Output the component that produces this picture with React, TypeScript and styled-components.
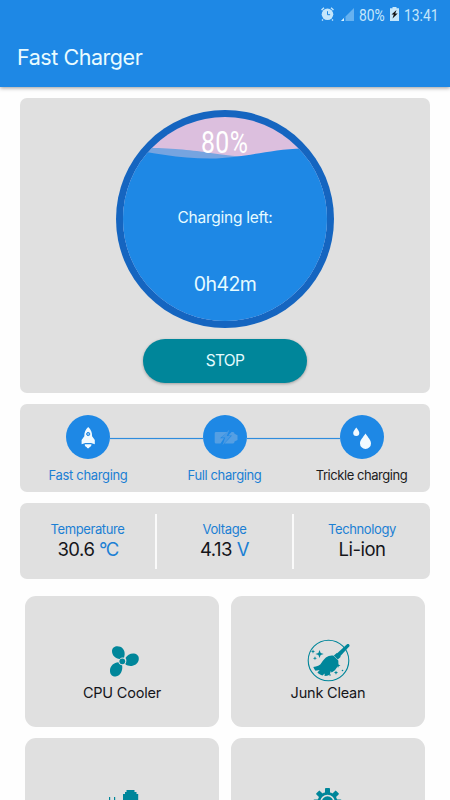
import React from "react";
import styled, { createGlobalStyle } from "styled-components";

const BLUE = "#1e88e5";
const TEAL = "#00869a";
const LABEL = "#1b7fd4";

const GlobalStyle = createGlobalStyle`
  * { box-sizing: border-box; }
  html, body { margin: 0; padding: 0; background: #fefefe; overflow: hidden; }
  body { font-family: Inter, Roboto, sans-serif; color: #15151a; }
`;

const Screen = styled.div`
  width: 450px;
  height: 800px;
  overflow: hidden;
  background: #fefefe;
  display: flex;
  flex-direction: column;
`;

const Header = styled.header`
  flex: none;
  height: 87px;
  background: ${BLUE};
  box-shadow: 0 1px 4px rgba(0, 0, 0, 0.4);
`;

const StatusBar = styled.div`
  height: 28px;
  padding: 0 11px 0 0;
  display: flex;
  align-items: center;
  justify-content: flex-end;
  color: #c4e6fb;
  font: 400 16.5px/27px Roboto, sans-serif;
`;

const StatusText = styled.span<{ $width: number }>`
  width: ${(p) => p.$width}px;
  margin-top: 2px;
  white-space: nowrap;
  transform: scaleX(0.84);
  transform-origin: left center;
`;

const StatusIcon = styled.svg<{ $gap: number }>`
  flex: none;
  display: block;
  margin-right: ${(p) => p.$gap}px;
`;

const Title = styled.h1`
  margin: 0;
  padding-left: 17px;
  font-size: 21.5px;
  line-height: 58px;
  font-weight: 400;
  letter-spacing: -0.45px;
  color: #e9fbff;
`;

const Main = styled.main`
  padding: 11px 20px 0;
  display: flex;
  flex-direction: column;
`;

const Card = styled.section<{ $height: number; $gap: number }>`
  flex: none;
  height: ${(p) => p.$height}px;
  margin-bottom: ${(p) => p.$gap}px;
  background: #e0e0e0;
  border-radius: 7px;
`;

const ChargeCard = styled(Card)`
  display: flex;
  flex-direction: column;
  align-items: center;
  padding-top: 11.5px;
`;

const Gauge = styled.div`
  position: relative;
  width: 218px;
  height: 218px;
  color: #e6fbff;
  text-align: center;
`;

const Wave = styled.svg`
  position: absolute;
  inset: 0;
`;

const GaugeText = styled.div`
  position: relative;
  display: flex;
  flex-direction: column;
  align-items: center;
`;

const Percent = styled.div`
  margin-top: 14px;
  height: 38px;
  font: 400 31px/38px Roboto, sans-serif;
  letter-spacing: 0.6px;
  color: #fff;
  transform: scaleX(0.8);
`;

const GaugeLabel = styled.div`
  margin-top: 44px;
  font-size: 15.5px;
  line-height: 24px;
  letter-spacing: -0.25px;
`;

const TimeLeft = styled.div`
  margin-top: 38px;
  font-size: 19.5px;
  line-height: 32px;
  letter-spacing: -0.6px;
`;

const StopButton = styled.button`
  margin-top: 11.5px;
  width: 164px;
  height: 44px;
  border: 0;
  border-radius: 22px;
  background: ${TEAL};
  color: #e4fbff;
  font: 400 15.5px/44px Inter, sans-serif;
  letter-spacing: -0.7px;
  padding: 0;
  box-shadow: 0 1px 3px rgba(0, 0, 0, 0.3);
`;

const StageCard = styled(Card)`
  display: grid;
  grid-template-columns: 136px 137px 137px;
  padding-top: 11px;
`;

const Stage = styled.div`
  display: flex;
  flex-direction: column;
  align-items: center;
`;

const StageRow = styled.div<{ $left: boolean; $right: boolean }>`
  align-self: stretch;
  height: 44px;
  display: grid;
  grid-template-columns: 1fr 44px 1fr;
  align-items: center;
  &::before,
  &::after {
    content: "";
    height: 1px;
    margin-top: 3px;
    box-shadow: 0 0 1px #3890dc;
  }
  &::before {
    background: #2f8cdd;
    visibility: ${(p) => (p.$left ? "visible" : "hidden")};
  }
  &::after {
    background: #2f8cdd;
    visibility: ${(p) => (p.$right ? "visible" : "hidden")};
  }
`;

const StageDot = styled.div`
  width: 44px;
  height: 44px;
  border-radius: 50%;
  background: ${BLUE};
  svg { display: block; }
`;

const StageLabel = styled.div<{ $muted: boolean; $spacing: number }>`
  margin-top: 6px;
  font-size: 13px;
  line-height: 20px;
  letter-spacing: ${(p) => p.$spacing}px;
  white-space: nowrap;
  color: ${(p) => (p.$muted ? "#1c1c20" : LABEL)};
`;

const StatsCard = styled(Card)`
  display: grid;
  grid-template-columns: 135px 137px 138px;
  padding: 11px 0 10px;
`;

const Stat = styled.div`
  display: flex;
  flex-direction: column;
  align-items: center;
  padding-top: 6px;
  & + & { border-left: 2px solid #fafafa; }
`;

const StatLabel = styled.div`
  font-size: 13px;
  line-height: 18px;
  letter-spacing: -0.38px;
  color: ${LABEL};
`;

const StatValue = styled.div`
  font-size: 18.5px;
  line-height: 22px;
  letter-spacing: -0.5px;
  white-space: pre;
`;

const Unit = styled.span`
  color: ${LABEL};
`;

const Degree = styled(Unit)`
  letter-spacing: -1.6px;
`;

const Tools = styled.div`
  padding: 0 5px;
  display: grid;
  grid-template-columns: 194px 194px;
  grid-auto-rows: 131px;
  gap: 11px 12px;
`;

const Tool = styled.div`
  background: #e0e0e0;
  border-radius: 11px;
  display: flex;
  flex-direction: column;
  align-items: center;
  padding-top: 42px;
  svg { display: block; flex: none; }
`;

const ToolLabel = styled.div`
  font-size: 14.5px;
  line-height: 20px;
  margin-top: 1px;
  letter-spacing: -0.2px;
`;

const FanIcon = () => (
  <svg width="44" height="44" viewBox="0 0 44 44" fill={TEAL}>
    <circle cx="22.300" cy="23.300" r="2.900" />
    <path d="M19.700 20.900c-3.900-.3-7.900-3.600-7.700-8 .2-4.200 4.600-5.700 8.300-4.100 4.300 1.900 5.200 6.600 3.700 10.900-1.700-.4-3.200 0-4.300 1.200z" />
    <path d="M26.300 23.400c.2-1.200-.1-2.400-.8-3.300 1.600-3 5-4.900 8.500-4.500 3.700.5 5.300 3.200 4.700 6.400-.9 4.800-6.500 7-10.900 5.600-1.100-.4-2-1-2.600-1.700.6-.6 1-1.500 1.100-2.500z" />
    <path d="M18.400 24.200c.5 1.700 1.800 2.900 3.700 3.100 1 4.600-1.500 10.900-6.400 11.200-4.100.2-6-3-5.700-6.600.4-4.400 4-7.300 8.400-7.700z" />
  </svg>
);

const BroomIcon = () => (
  <svg width="44" height="44" viewBox="0 0 44 44" fill={TEAL}>
    <circle cx="22.500" cy="22.500" r="20.300" fill="none" stroke={TEAL} strokeWidth="1.100" />
    <path d="M41 6.300c1.700-1 3.300.8 2.200 2.300L33.300 19.300l-3.200-3.100z" />
    <path d="M30.900 14.900l3.900 3.900-3 2.700-4-4z" />
    <path d="M27.300 17.500l5 5c.7 5-2.200 9.900-6.700 11.900l-.8-1.500-1.100 3.900c-1.800.8-3.400 1.300-5.200 1.300l.2-2.500-2.200 1.900c-2-.6-3.800-1.700-5.100-3.100l2.300-2.400-4.200.7c-.9-1.100-1.700-2.300-2.200-3.600 3.400-.2 6.900-1.600 8.400-4.500 2.400-4.400 6.600-7.900 11.600-7.100z" />
    <path d="M13.500 12l1.200 2.900 3 1.100-3 1.100-1.200 2.900-1.100-2.900-3-1.100 3-1.100z" />
    <path d="M7 11.300l.6 1.600 1.600.6-1.600.6-.6 1.600-.6-1.600-1.600-.6 1.600-.6zM9 18.200l.5 1.500 1.500.5-1.500.6-.5 1.500-.6-1.500-1.500-.6 1.500-.5zM32 25l.7 1.800 1.800.7-1.800.7-.7 1.800-.7-1.800-1.800-.7 1.800-.7zM30 32.500l.6 1.500 1.500.6-1.500.6-.6 1.500-.6-1.500-1.500-.6 1.500-.6z" />
    <circle cx="24" cy="37" r=".8" />
    <circle cx="36.500" cy="32.500" r=".8" />
  </svg>
);

const PlugIcon = () => (
  <svg width="44" height="44" viewBox="0 0 44 44" fill={TEAL}>
    <path d="M9 17h1.200v12H9zM14 17h1.200v12H14z" />
    <path d="M26.500 10h8v2h2v2h1.700v18H23V14h2v-2h1.500z" />
  </svg>
);

const GearIcon = () => (
  <svg width="44" height="44" viewBox="0 0 44 44">
    <g fill={TEAL}>
      <circle cx="21.500" cy="22" r="10" />
      {[0, 45, 90, 135, 180, 225, 270, 315].map((angle) => (
        <rect key={angle} x="19" y="8" width="5" height="6" rx=".8" transform={`rotate(${angle} 21.500 22)`} />
      ))}
    </g>
    <circle cx="21.500" cy="22" r="6.500" fill={TEAL} stroke="#e0e0e0" strokeWidth="1.500" />
  </svg>
);

const RocketIcon = () => (
  <svg width="44" height="44" viewBox="0 0 44 44" fill="#f1faff">
    <path d="M22.200 12c2.900 2.600 3.900 5.500 3.900 9.200l2.700 3.700v4.400l-3.800-1.200h-5.600l-3.800 1.200v-4.400l2.700-3.700c0-3.700 1-6.600 3.900-9.200z" />
    <circle cx="22.200" cy="19" r="1.600" fill="#8cbfec" stroke={BLUE} strokeWidth="1" />
    <path d="M18.800 29.300h6.600c.2 1.500-.6 2.600-1.800 2.600-.2.900-.7 1.300-1.500 1.300s-1.300-.4-1.500-1.300c-1.200 0-2-1.100-1.800-2.600z" />
  </svg>
);

const BatteryIcon = () => (
  <svg width="44" height="44" viewBox="0 0 44 44" fill="#559fe3">
    <path d="M13 17h11.500l-7.500 6.200h4L17.500 28.500H13q-1.300 0-1.300-1.300v-8.900Q11.700 17 13 17z" />
    <path d="M28.500 17H30q1.500 0 1.500 1.700l3 1.600v4.700l-3 1.600q0 1.900-1.500 1.900h-8.500l7.500-8h-3.700z" />
    <path d="M26.500 14.500l-8 7.900h3.700l-2.700 7.800 8.300-9.300h-4z" opacity=".75" />
  </svg>
);

const DropsIcon = () => (
  <svg width="44" height="44" viewBox="0 0 44 44" fill="#f1faff">
    <path d="M16.300 12.500c1.600 2.300 3 3.700 3 5.400a3.050 3.050 0 0 1-6.100 0c0-1.700 1.500-3.100 3.100-5.400z" />
    <path d="M25.500 18.500c2.700 4.200 5.500 6.700 5.500 9.900a5.500 5.500 0 0 1-11 0c0-3.200 2.800-5.700 5.500-9.900z" />
  </svg>
);

const stages = [
  { label: "Fast charging", icon: <RocketIcon />, muted: false, spacing: -0.34 },
  { label: "Full charging", icon: <BatteryIcon />, muted: false, spacing: -0.38 },
  { label: "Trickle charging", icon: <DropsIcon />, muted: true, spacing: -0.45 },
];

export default function App() {
  return (
    <>
      <GlobalStyle />
      <Screen>
        <Header>
          <StatusBar>
            <StatusIcon $gap={7} width="13" height="14" viewBox="0 0 13 14">
              <path d="M.5 3L3 .8M12.500 3L10 .8M2 12.500l-1 1M11 12.500l1 1" stroke="#c4e6fb" strokeWidth="1.400" />
              <circle cx="6.500" cy="7.300" r="5.800" fill="#c4e6fb" />
              <path d="M6.500 4.200v3.500h2.600" fill="none" stroke={BLUE} strokeWidth="1" />
            </StatusIcon>
            <StatusIcon $gap={5} width="13" height="13" viewBox="0 0 13 13">
              <path d="M13 0v13H0z" fill="#65b1f0" />
              <path d="M3 10v3H0z" fill="#d9f2ff" />
              <path d="M3 10l1.500-1.500V13H3z" fill={BLUE} />
            </StatusIcon>
            <StatusText $width={31}>80%</StatusText>
            <StatusIcon $gap={5} width="9" height="14" viewBox="0 0 9 14">
              <path d="M2.500 0h4v1.300H9V14H0V1.300h2.500z" fill="#c4e6fb" />
              <path d="M6.500 3L1.500 7.500h2.300L2.500 11.500 7.700 6.500H5.200z" fill="#111" />
            </StatusIcon>
            <StatusText $width={35}>13:41</StatusText>
          </StatusBar>
          <Title>Fast Charger</Title>
        </Header>
        <Main>
          <ChargeCard $height={295} $gap={11}>
            <Gauge>
              <Wave width="218" height="218" viewBox="0 0 218 218">
                <defs>
                  <clipPath id="gauge-face">
                    <circle cx="109" cy="109" r="102" />
                  </clipPath>
                </defs>
                <circle cx="109" cy="109" r="109" fill="#1565c0" />
                <g clipPath="url(#gauge-face)">
                  <rect width="218" height="218" fill="#dcbfde" />
                  <path d="M0 38C45 37 65 39 88 42C115 46 125 47 150 48H218V218H0z" fill="#76a4e0" />
                  <path d="M0 37C34 42 58 48.500 94 48.500C128 48.500 150 39.500 187 38.500H218V218H0z" fill={BLUE} />
                </g>
              </Wave>
              <GaugeText>
                <Percent>80%</Percent>
                <GaugeLabel>Charging left:</GaugeLabel>
                <TimeLeft>0h42m</TimeLeft>
              </GaugeText>
            </Gauge>
            <StopButton>STOP</StopButton>
          </ChargeCard>
          <StageCard $height={88} $gap={11}>
            {stages.map((s, i) => (
              <Stage key={s.label}>
                <StageRow $left={i > 0} $right={i < 2}>
                  <StageDot>{s.icon}</StageDot>
                </StageRow>
                <StageLabel $muted={s.muted} $spacing={s.spacing}>{s.label}</StageLabel>
              </Stage>
            ))}
          </StageCard>
          <StatsCard $height={76} $gap={17}>
            <Stat>
              <StatLabel>Temperature</StatLabel>
              <StatValue>30.6 <Degree>°C</Degree></StatValue>
            </Stat>
            <Stat>
              <StatLabel>Voltage</StatLabel>
              <StatValue>4.13 <Unit>V</Unit></StatValue>
            </Stat>
            <Stat>
              <StatLabel>Technology</StatLabel>
              <StatValue>Li-ion</StatValue>
            </Stat>
          </StatsCard>
          <Tools>
            <Tool><FanIcon /><ToolLabel>CPU Cooler</ToolLabel></Tool>
            <Tool><BroomIcon /><ToolLabel>Junk Clean</ToolLabel></Tool>
            <Tool><PlugIcon /></Tool>
            <Tool><GearIcon /></Tool>
          </Tools>
        </Main>
      </Screen>
    </>
  );
}
